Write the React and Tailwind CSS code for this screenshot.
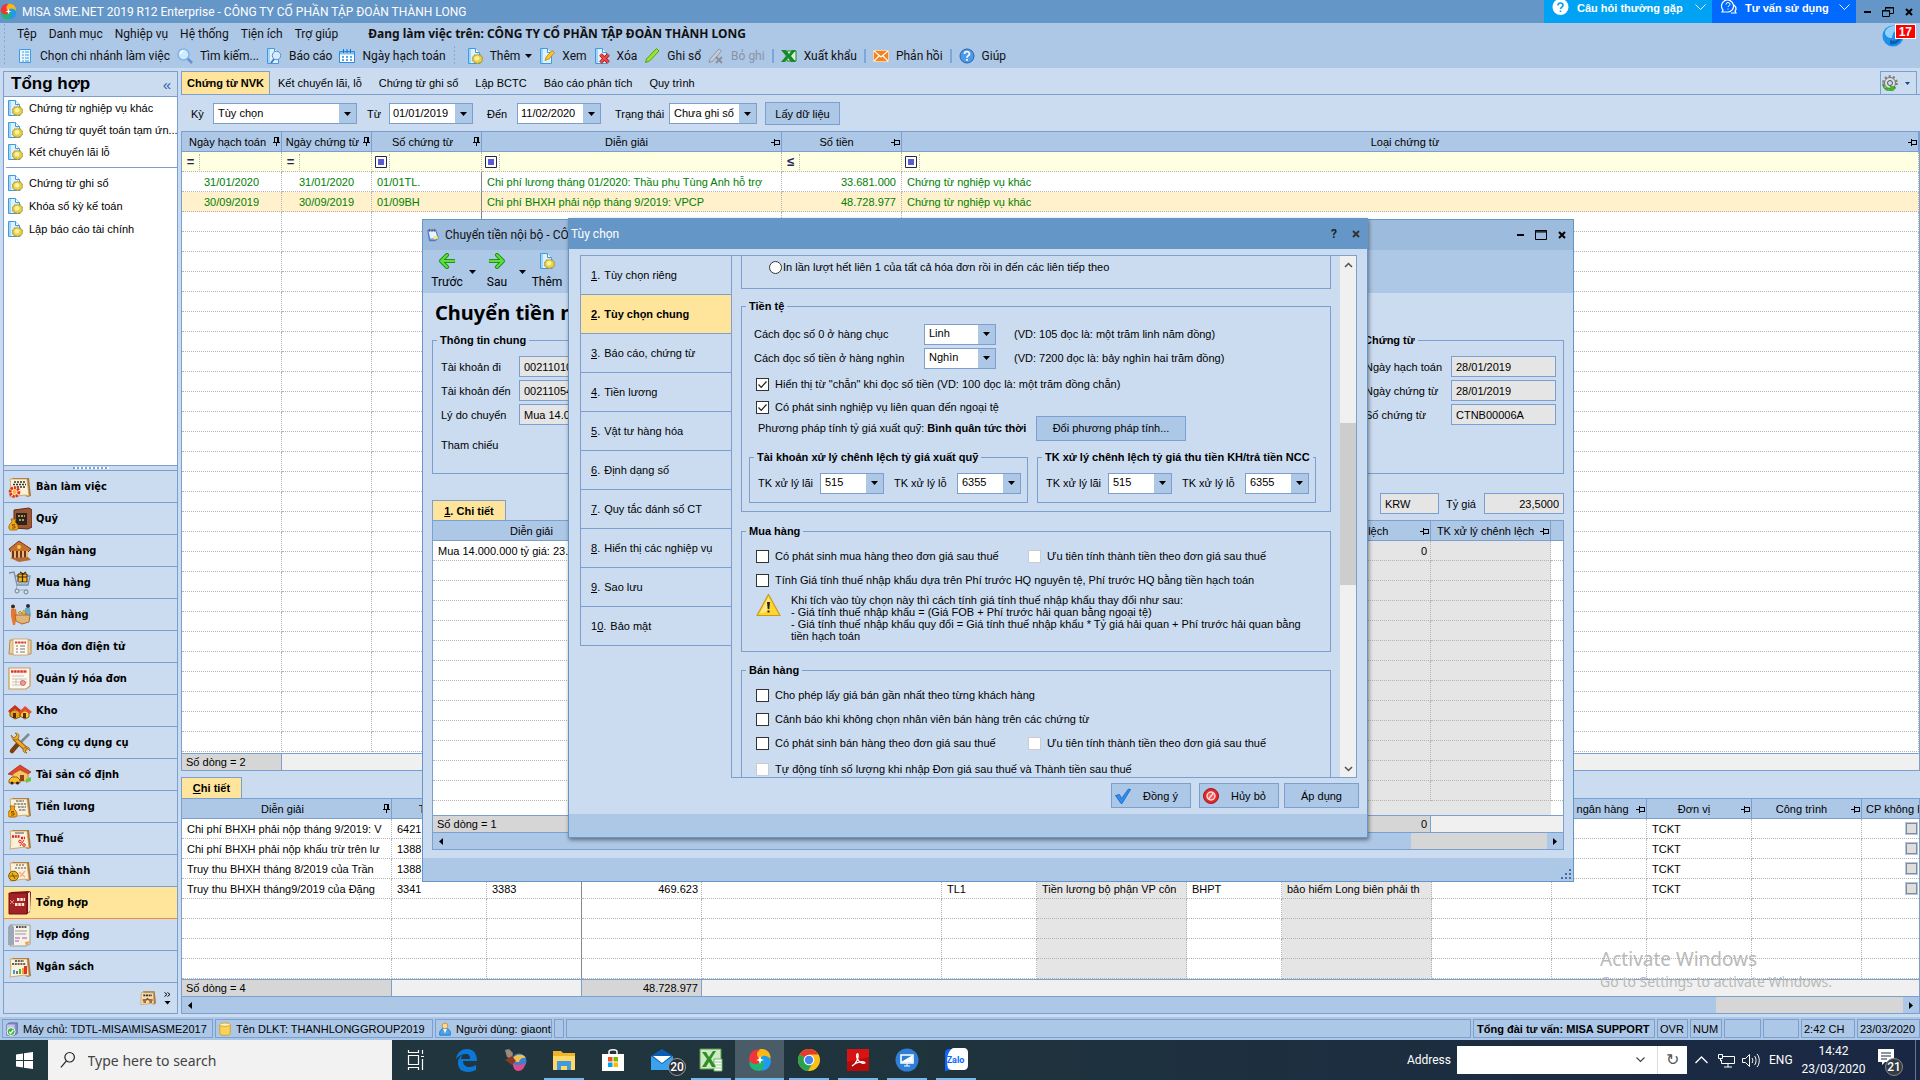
import { useId } from "react";

const UI = "font-['Roboto',sans-serif]";
const SEGOE = "font-['Noto_Sans',sans-serif]";

const MENU = ["Tệp", "Danh mục", "Nghiệp vụ", "Hệ thống", "Tiện ích", "Trợ giúp"];

const TABS = ["Kết chuyển lãi, lỗ", "Chứng từ ghi sổ", "Lập BCTC", "Báo cáo phân tích", "Quy trình"];

const NAV = [
  ["Bàn làm việc", "desk"],
  ["Quỹ", "safe"],
  ["Ngân hàng", "bank"],
  ["Mua hàng", "cart"],
  ["Bán hàng", "sell"],
  ["Hóa đơn điện tử", "einvoice"],
  ["Quản lý hóa đơn", "invoice"],
  ["Kho", "stock"],
  ["Công cụ dụng cụ", "tools"],
  ["Tài sản cố định", "asset"],
  ["Tiền lương", "salary"],
  ["Thuế", "tax"],
  ["Giá thành", "cost"],
  ["Tổng hợp", "ledger"],
  ["Hợp đồng", "contract"],
  ["Ngân sách", "budget"],
];

const OPTION_TABS = [
  ["1", "Tùy chọn riêng"],
  ["2", "Tùy chọn chung"],
  ["3", "Báo cáo, chứng từ"],
  ["4", "Tiền lương"],
  ["5", "Vật tư hàng hóa"],
  ["6", "Định dạng số"],
  ["7", "Quy tắc đánh số CT"],
  ["8", "Hiển thị các nghiệp vụ"],
  ["9", "Sao lưu"],
  ["10", "Bảo mật"],
];

const VOUCHERS = [
  ["31/01/2020", "31/01/2020", "01/01TL.", "Chi phí lương tháng 01/2020: Thầu phụ Tùng Anh hỗ trợ", "33.681.000", "Chứng từ nghiệp vụ khác"],
  ["30/09/2019", "30/09/2019", "01/09BH", "Chi phí BHXH phải nộp tháng 9/2019: VPCP", "48.728.977", "Chứng từ nghiệp vụ khác"],
];

const DETAIL_COLS = [
  { head: "Diễn giải", width: 210, pin: "v" },
  { head: "TK Nợ", width: 95, pin: "v" },
  { head: "TK Có", width: 95, pin: "v", solid: true },
  { head: "Số tiền", width: 120, pin: "h", right: true },
  { head: "Đối tượng", width: 240, pin: "h" },
  { head: "Khoản mục CP", width: 95, pin: "h" },
  { head: "Tên khoản mục CP", width: 150, pin: "h", grey: true },
  { head: "Mã thống kê", width: 95, pin: "h" },
  { head: "Tên mã thống kê", width: 150, pin: "h", grey: true },
  { head: "Đối tượng Có", width: 120, pin: "h" },
  { head: "TK ngân hàng", width: 95, pin: "h" },
  { head: "Đơn vị", width: 105, pin: "h" },
  { head: "Công trình", width: 110, pin: "h" },
];

const DETAILS = [
  ["Chi phí BHXH phải nộp tháng 9/2019: V", "6421", "", "", "", "", "", "", "", "", "", "TCKT", ""],
  ["Chi phí BHXH phải nộp khấu trừ trên lư", "1388", "", "", "", "", "", "", "", "", "", "TCKT", ""],
  ["Truy thu BHXH tháng 8/2019 của Trần", "1388", "", "", "", "", "", "", "", "", "", "TCKT", ""],
  ["Truy thu BHXH tháng9/2019 của Đặng", "3341", "3383", "469.623", "", "TL1", "Tiền lương bộ phận VP côn", "BHPT", "bảo hiểm Long biên phải th", "", "", "TCKT", ""],
];

/* ---------- small drawings ---------- */

function Pin({ dir = "h" }) {
  return dir === "h" ? (
    <svg width="9" height="8" viewBox="0 0 9 8" className="shrink-0" shapeRendering="crispEdges">
      <path d="M0 4.500h3M3.500 1v7M4 2.500h4.500v3M4 6h5" fill="none" stroke="#000" />
    </svg>
  ) : (
    <svg width="7" height="9" viewBox="0 0 7 9" className="shrink-0" shapeRendering="crispEdges">
      <path d="M0 5.500h7M1.500 5V.500h3.500M3.500 6v3" fill="none" stroke="#000" />
      <path d="M5 0v5" fill="none" stroke="#000" strokeWidth="2" />
    </svg>
  );
}

function Arrow({ className = "" }) {
  return (
    <svg width="7" height="4" viewBox="0 0 7 4" className={`shrink-0 ${className}`}>
      <path d="M0 0h7L3.500 4z" fill="#000" />
    </svg>
  );
}

function MisaLogo({ size }) {
  return (
    <svg width={size} height={size} viewBox="0 0 24 24">
      <path d="M12 12C7 12 6 5 12 1c8-1 12 6 10 11-2-4-6-4-10 0z" fill="#fdb813" />
      <path d="M12 12c0-5 7-6 11 0 0 8-6 12-11 10 4-2 4-6 0-10z" fill="#1d9bf0" />
      <path d="M12 12c5 0 6 7 0 11C4 23 0 18 2 12c2 4 6 4 10 0z" fill="#21b573" />
      <path d="M12 12c0 5-7 6-11 0C1 4 7 0 12 2 8 4 8 8 12 12z" fill="#f0353a" />
      <path d="M12 8l1 3 3 1-3 1-1 3-1-3-3-1 3-1z" fill="#fff" />
    </svg>
  );
}

function Paper() {
  return (
    <>
      <path d="M1.500.500h7l4 4v11h-11z" fill="#dff1fd" stroke="#3f9be0" />
      <path d="M8.500.500v4h4" fill="#fff" stroke="#3f9be0" />
      <path d="M3 1v14" stroke="#8ccbf5" strokeWidth="1.500" />
    </>
  );
}

function ToolIcon({ name, size = 16 }) {
  const shapes = {
    doc: (
      <>
        <path d="M2.500 1.500h11v13h-11z" fill="#e8f6ff" stroke="#3f9be0" />
        <path d="M5 4h2M5 7h2M5 10h2M5 13h2M8 4h4M8 7h4M8 10h4M8 13h4" stroke="#3f9be0" />
      </>
    ),
    search: (
      <>
        <path d="M10 10l5 5" stroke="#6c8fd8" strokeWidth="2.500" />
        <circle cx="6.500" cy="6.500" r="5.500" fill="#cfeafc" stroke="#7fb6ea" strokeWidth="1.500" />
        <path d="M3.500 6a3 3 0 013-3" stroke="#fff" strokeWidth="1.500" fill="none" />
      </>
    ),
    report: (
      <>
        <Paper />
        <circle cx="10.500" cy="7.500" r="4.200" fill="#d5ecff" stroke="#5a8fd0" />
        <path d="M8 11l-3 4" stroke="#4a78c8" strokeWidth="2" />
      </>
    ),
    calendar: (
      <>
        <path d="M.5 3.500h15v11H.5z" fill="#fff" stroke="#2a8be0" />
        <path d="M1 4h14v2.500H1z" fill="#7cc3f5" />
        <path d="M4.500 1v4M8 1v4M11.500 1v4" stroke="#1f6fc0" />
        <path d="M3 9h10M3 12h10" stroke="#2a8be0" strokeWidth="1.500" strokeDasharray="2 2" />
      </>
    ),
    add: (
      <>
        <Paper />
        <path d="M10.500 6l1.300 1.200 1.800-.4.500 1.700 1.600.8-.7 1.700.7 1.600-1.600.9-.5 1.600-1.800-.3-1.300 1.200-1.300-1.200-1.800.3-.5-1.600-1.600-.9.700-1.600-.7-1.700 1.600-.8.5-1.700 1.800.4z" fill="#e8d24c" stroke="#a58a1c" strokeWidth=".8" />
        <circle cx="10" cy="10.300" r="2.300" fill="#fbf2a0" />
      </>
    ),
    view: (
      <>
        <Paper />
        <path d="M6 12.500l1.200-3.500L13 2.500l2.500 2L10 11z" fill="#ffc52e" stroke="#b9801a" strokeWidth=".8" />
      </>
    ),
    remove: (
      <>
        <Paper />
        <path d="M6.500 6.500l8 8M14.500 6.500l-8 8" stroke="#a51212" strokeWidth="3.600" />
        <path d="M6.500 6.500l8 8M14.500 6.500l-8 8" stroke="#ef4a4a" strokeWidth="2" />
      </>
    ),
    post: <path d="M1.500 14.500l1-3.500L12.500.5 15 3l-9.500 10z" fill="#9be62a" stroke="#4ba312" />,
    unpost: (
      <>
        <path d="M1 14.500l1-3.500 9-10 2.500 2-8.500 10z" fill="#c4ccd6" stroke="#8e98a6" />
        <path d="M8 9l6 6M14 9l-6 6" stroke="#8a8f98" strokeWidth="1.800" />
      </>
    ),
    excel: (
      <>
        <path d="M6 3h9v10H6z" fill="#d9f0d2" stroke="#1e8a2c" />
        <path d="M0 2h5l3 4 3-4h4L10 8l5 6h-5l-3-4-3 4H0l5-6z" fill="#178a2a" />
      </>
    ),
    mail: (
      <>
        <path d="M.5 2.500h15v11H.5z" fill="#f58220" stroke="#fbd0a0" />
        <path d="M1 3l7 6 7-6M1 13l5-5M15 13l-5-5" fill="none" stroke="#fff" strokeWidth="1.200" />
      </>
    ),
    help: (
      <>
        <circle cx="8" cy="8" r="7" fill="#4c9be6" stroke="#2762b5" />
        <path d="M5.500 6a2.500 2.500 0 115 0c0 1.600-2.500 1.800-2.500 3.700M8 11v1.700" fill="none" stroke="#fff" strokeWidth="1.700" />
      </>
    ),
    prev: <path d="M15 8H2M8 2L2 8l6 6" fill="none" stroke="#1d9318" strokeWidth="4" strokeLinejoin="round" strokeLinecap="round" />,
    next: <path d="M1 8h13M8 2l6 6-6 6" fill="none" stroke="#1d9318" strokeWidth="4" strokeLinejoin="round" strokeLinecap="round" />,
    note: (
      <>
        <path d="M2 2.500h9l3 9-3 3H4z" fill="#6f9fe8" stroke="#4963b8" />
        <path d="M3 4h8l2 7-8 1z" fill="#e8f4ff" />
        <path d="M8 9h5l1 3-5 1z" fill="#ffe57a" />
        <path d="M4 1v3M7 1v3M10 1v3" stroke="#555" />
      </>
    ),
    gear: (
      <>
        <circle cx="8" cy="8" r="6.500" fill="none" stroke="#7b7b7b" strokeWidth="2.600" strokeDasharray="2 2.080" />
        <circle cx="8" cy="8" r="5.500" fill="#dedede" stroke="#777" />
        <circle cx="8" cy="8" r="2.500" fill="#cbdcf1" stroke="#555" />
        <path d="M1 8c0 5 4 6 8 5l-1-2 5 1-2 4-1-1c-5 2-10-1-9-7z" fill="#3cc41e" stroke="#1d8a12" strokeWidth=".5" />
      </>
    ),
    server: (
      <>
        <path d="M2 3l3-2h9v12l-3 2H2z" fill="#8b8fc9" stroke="#5a5e9c" />
        <path d="M2 3h9v12H2z" fill="#c3c6ea" />
        <circle cx="7" cy="11" r="4.500" fill="#3db53d" stroke="#fff" />
        <path d="M5 11l1.500 2L9.500 9" fill="none" stroke="#fff" strokeWidth="1.500" />
      </>
    ),
    db: (
      <>
        <path d="M2 3v10c0 3 12 3 12 0V3z" fill="#f7d35c" stroke="#d59b1e" />
        <ellipse cx="8" cy="3" rx="6" ry="2" fill="#fff2b3" stroke="#d59b1e" />
      </>
    ),
    user: (
      <>
        <path d="M2 15c-1-6 3-8 6-8s7 2 6 8z" fill="#4aa4ea" stroke="#2473c0" />
        <path d="M6 8l2 5 2-5z" fill="#fff" />
        <circle cx="8" cy="4.500" r="3.300" fill="#ffd79a" stroke="#c58a3c" />
      </>
    ),
    check: <path d="M.500 7.500l4-1 2 4L13.500 1l2 .5L7 15.500H6z" fill="#2f8ff0" stroke="#1461c0" strokeWidth=".8" />,
    cancel: (
      <>
        <circle cx="8" cy="8" r="7.500" fill="#d92c32" stroke="#a8141c" />
        <circle cx="8" cy="8" r="4" fill="#ee5a5e" stroke="#ffd9d9" strokeWidth="1.500" />
        <path d="M5.500 11l5-6" stroke="#ffd9d9" strokeWidth="1.500" />
      </>
    ),
  };
  const highlight = {
    prev: <path d="M15 8H2M8 2L2 8l6 6" fill="none" stroke="#5fe03c" strokeWidth="2" strokeLinecap="round" />,
    next: <path d="M1 8h13M8 2l6 6-6 6" fill="none" stroke="#5fe03c" strokeWidth="2" strokeLinecap="round" />,
  };
  return (
    <svg width={size} height={size} viewBox="0 0 16 16" className="shrink-0">
      {shapes[name]}
      {highlight[name]}
    </svg>
  );
}

function CreamPaper() {
  return (
    <>
      <path d="M4 3h17l2 18-4 1z" fill="#a8763a" />
      <path d="M2 4h17l2 17-4-1-15 2c1-6 1-12 0-18z" fill="#fbf0d8" stroke="#c99b5b" strokeWidth=".8" />
    </>
  );
}

function MoneyBag({ x = 0, y = 0 }) {
  return (
    <g transform={`translate(${x} ${y})`}>
      <path d="M3 3l-1-3h5L6 3c4 3 4 8 1 8H2c-3 0-3-5 1-8z" fill="#f0a818" stroke="#9b5a06" strokeWidth=".8" />
      <path d="M6 5.500H3.500V7H6v2H3" fill="none" stroke="#7a3c00" strokeWidth=".8" />
    </g>
  );
}

function NavIcon({ name, size = 24 }) {
  const shapes = {
    desk: (
      <>
        <CreamPaper />
        <path d="M6 7h11M5 9.500h13M9 12h8" stroke="#333" strokeWidth="1.300" strokeDasharray="2 1" />
        <circle cx="6.500" cy="17" r="4.300" fill="none" stroke="#e53012" strokeWidth="3" strokeDasharray="2.200 1" />
        <circle cx="6.500" cy="17" r="2" fill="#ffb52c" />
      </>
    ),
    safe: (
      <>
        <path d="M6 3l15-2 3 2v17l-4 2-14-1z" fill="#9b5634" stroke="#5f2d17" />
        <path d="M8 6h11v12H8z" fill="#2d241f" />
        <path d="M10 9h7M11 13h6" stroke="#b59a55" strokeWidth="2" strokeDasharray="2 1" />
        <MoneyBag x={1} y={12} />
      </>
    ),
    bank: (
      <>
        <path d="M1 10L11 2l12 8-3 3H3z" fill="#c86f32" stroke="#7a3812" />
        <path d="M3 12h17v7H3z" fill="#e9b878" />
        <path d="M5 12v7M9 12v7M13 12v7M17 12v7" stroke="#6c3415" strokeWidth="2" />
        <path d="M2 19l18-1 3 3-12 2z" fill="#b56c39" />
        <circle cx="11" cy="8" r="2" fill="#f4cd3f" />
      </>
    ),
    cart: (
      <>
        <path d="M1 2l5-1 3 13h11l2-9H7" fill="none" stroke="#7c8fa4" strokeWidth="1.300" />
        <path d="M10 3h9v8h-9z" fill="#f3b51f" stroke="#3b2703" />
        <path d="M14.500 3v8M10 6h9M12 1l3 2 3-2" stroke="#402600" strokeWidth="1.200" fill="none" />
        <path d="M9 14l-1 5h12M10 12h10M11 10v4M14 11v3M17 11v3" stroke="#9aabbc" fill="none" />
        <circle cx="9" cy="20" r="2" fill="#dce4ec" stroke="#708090" />
        <circle cx="18" cy="21" r="2" fill="#dce4ec" stroke="#708090" />
      </>
    ),
    sell: (
      <>
        <circle cx="5" cy="3.500" r="2" fill="#3b2a20" />
        <path d="M3 6h5l1 7-2 9H5L3 13z" fill="#e8762b" />
        <circle cx="20" cy="3" r="2" fill="#2c2c3a" />
        <path d="M17 5h5l1 7h-6z" fill="#6da9cb" />
        <path d="M7 12h15l-1 7-7 2-6-3z" fill="#e3b574" stroke="#a56b2b" />
        <path d="M10 10l2-2 2 2 2-3 2 4z" fill="#ffd23b" stroke="#9a6a00" strokeWidth=".6" />
      </>
    ),
    einvoice: (
      <>
        <path d="M2 5h21v14H1z" fill="#ead2a4" stroke="#b98a4c" />
        <path d="M5 4h15v16H5z" fill="#fffaf0" stroke="#c99b5b" strokeWidth=".8" />
        <path d="M7 7.500h11" stroke="#dd3a2a" strokeWidth="2" strokeDasharray="2.500 .6" />
        <path d="M8 11h2M12 11h5M8 14h2M12 14h5M8 17h2M12 17h5" stroke="#777" />
      </>
    ),
    invoice: (
      <>
        <path d="M1 1h21v18l-4 3H1z" fill="#fff8ec" stroke="#c99b5b" strokeWidth="1.200" />
        <path d="M3 4.500h16" stroke="#e03030" strokeWidth="2.500" strokeDasharray="2.500 .6" />
        <path d="M4 9h12M4 12h15M4 15h15M4 18h9M8 12v6M13 12v6" stroke="#b8b8b8" strokeWidth=".8" />
        <circle cx="15" cy="16" r="2.500" fill="#e9a0a0" stroke="#cc4444" strokeWidth=".7" />
      </>
    ),
    stock: (
      <>
        <path d="M2 11h10v7l-5 2-5-3z" fill="#e5a11b" stroke="#6b3f00" strokeWidth=".8" />
        <path d="M0 12l7-6 7 6-2 2-5-4-5 4z" fill="#c72f1e" />
        <path d="M13 12h8v6l-4 2-5-3z" fill="#ffcf35" stroke="#6b3f00" strokeWidth=".8" />
        <path d="M11 13l6-6 7 6-3 2-4-4-4 4z" fill="#e64a2b" />
        <path d="M5 14h3v5H5zM15 14h3v5h-3z" fill="#5a2b00" />
      </>
    ),
    tools: (
      <>
        <path d="M21 3L9 15" stroke="#7c8894" strokeWidth="2.500" />
        <path d="M10 13l-6 7" stroke="#7c3f12" strokeWidth="4.500" strokeLinecap="round" />
        <path d="M6 7l13 12" stroke="#8a5a12" strokeWidth="4.600" />
        <path d="M6 7l13 12" stroke="#f0a82a" strokeWidth="3" />
        <path d="M3 4l3 3 3-3-2-2c4 0 5 3 3 6-2 2-6 1-7-4zM22 20l-3-3-2 3 2 2c-4 0-5-3-3-5 3-2 6-1 6 3z" fill="#f0a82a" stroke="#8a5a12" strokeWidth=".7" />
      </>
    ),
    asset: (
      <>
        <path d="M0 11L12 2l11 7-3 2-8-4-8 5z" fill="#e3432a" stroke="#8f1e0e" strokeWidth=".6" />
        <path d="M5 11l7-4 8 4v7H5z" fill="#f7c469" stroke="#a56a18" strokeWidth=".6" />
        <path d="M12 12h4v6h-4z" fill="#8b4a13" />
        <path d="M1 17l3-3h5l3 3v3H1z" fill="#ffbf1f" stroke="#7a4a00" strokeWidth=".8" />
        <circle cx="4" cy="20" r="1.500" fill="#222" />
        <circle cx="9.500" cy="20" r="1.500" fill="#222" />
        <path d="M18 16l5-2v4l-5 2z" fill="#6cc24a" />
      </>
    ),
    salary: (
      <>
        <CreamPaper />
        <path d="M8 6h8M6 9h12M10 12h8M11 15h7" stroke="#444" strokeWidth="1.100" strokeDasharray="2.500 .8" />
        <MoneyBag x={0} y={11} />
      </>
    ),
    tax: (
      <>
        <CreamPaper />
        <path d="M7 6h9" stroke="#555" />
        <path d="M4 9.500h8M13 11h4" stroke="#e02020" strokeWidth="2.500" strokeDasharray="2 .8" />
        <circle cx="12" cy="14.500" r="1.300" fill="none" stroke="#e02020" />
        <circle cx="16" cy="18" r="1.300" fill="none" stroke="#e02020" />
        <path d="M16 13l-4 6" stroke="#e02020" />
      </>
    ),
    cost: (
      <>
        <CreamPaper />
        <path d="M8 6h8M7 9h11" stroke="#555" strokeDasharray="2 1" />
        <path d="M11 13l6 5M17 12l-5 6" stroke="#f2a98b" strokeWidth="1.200" />
        <circle cx="5.500" cy="17" r="4.800" fill="#f2b41e" stroke="#7a5200" />
        <path d="M2 17h7M4 14l3 6" stroke="#7a5200" />
      </>
    ),
    ledger: (
      <>
        <path d="M3 1l18-1 2 1-1 20-3 2H2z" fill="#7b1518" />
        <path d="M1 2h18v21H1z" fill="#a32227" stroke="#6e1013" />
        <path d="M20 2l2-1v19l-2 2z" fill="#f0dfc4" />
        <path d="M9 8.500h8M7 13.500h10" fill="none" stroke="#ffe7d0" strokeWidth="3" strokeDasharray="2.500 .8" />
        <path d="M2 9l4 4M6 9l-4 4" stroke="#e9c0a0" strokeWidth=".7" />
      </>
    ),
    contract: (
      <>
        <path d="M2 2h20v19l-4 2H2z" fill="#f7f2e6" stroke="#8a8a8a" strokeWidth=".8" />
        <path d="M0 4l3-3 3 3v18H0z" fill="#9aa8b8" />
        <path d="M8 4h11" stroke="#555" strokeWidth="2" strokeDasharray="2 .8" />
        <path d="M7 8h12M7 11h11" stroke="#999" />
        <path d="M7 15h5M14 15h5M7 18h4" stroke="#b24acb" strokeWidth="1.200" />
        <path d="M17 19l6-1-5 5z" fill="#e9a83c" />
      </>
    ),
    budget: (
      <>
        <CreamPaper />
        <path d="M7 6h9M4 9h14" stroke="#333" strokeWidth="1.500" strokeDasharray="2 .8" />
        <path d="M5 15h2v4H5z" fill="#36a4e0" />
        <path d="M8 16h2v3H8z" fill="#777" />
        <path d="M11 14h2v5h-2z" fill="#3cb54a" />
        <path d="M14 13h2v6h-2z" fill="#f2a51e" />
        <path d="M16 11h3v8h-3z" fill="#e03030" />
      </>
    ),
    deal: (
      <>
        <path d="M4 2h18l2 18-4 2z" fill="#a8763a" />
        <path d="M2 4h18l1 18-3-2-17 2z" fill="#f3ddb0" stroke="#c99b5b" />
        <path d="M5 8h13" stroke="#333" strokeWidth="2.500" strokeDasharray="3 1" />
        <path d="M4 15h5l2-2 3 2h5M5 18h4M14 18h4" stroke="#8a4a1c" strokeWidth="2" fill="none" />
      </>
    ),
  };
  return (
    <svg width={size} height={size} viewBox="0 0 24 24" className="shrink-0">
      {shapes[name]}
    </svg>
  );
}

/* ---------- controls ---------- */

function Combo({ value, label, className = "" }) {
  return (
    <span className={`relative flex h-[21px] border border-[#7ba0d0] bg-white ${className}`}>
      <select aria-label={label} defaultValue={value} className="w-full appearance-none bg-transparent pb-[2px] pl-1 text-black outline-none">
        <option>{value}</option>
      </select>
      <span className="pointer-events-none absolute inset-y-0 right-0 flex w-[17px] items-center justify-center bg-[#adc7e6]">
        <Arrow />
      </span>
    </span>
  );
}

function DateField({ value, label, className = "" }) {
  return (
    <span className={`flex h-[21px] border border-[#7ba0d0] bg-white ${className}`}>
      <input aria-label={label} defaultValue={value} className="w-full min-w-0 flex-1 pb-[2px] pl-[3px] outline-none" />
      <button aria-label={`Mở lịch ${label}`} className="flex w-[17px] shrink-0 items-center justify-center bg-[#adc7e6]">
        <Arrow />
      </button>
    </span>
  );
}

function Check({ children, checked, disabled, className = "" }) {
  const id = useId();
  return (
    <div className={`flex items-center gap-[6px] ${className}`}>
      <span className="relative h-[13px] w-[13px] shrink-0">
        <input
          id={id}
          type="checkbox"
          defaultChecked={checked}
          disabled={disabled}
          className="peer block h-[13px] w-[13px] appearance-none border border-[#333] bg-white disabled:border-[#ccc]"
        />
        <svg viewBox="0 0 13 13" className="pointer-events-none absolute inset-0 hidden h-[13px] w-[13px] peer-checked:block">
          <path d="M2.500 6.500l2.700 2.800L10.500 3.500" fill="none" stroke="#222" strokeWidth="1.200" />
        </svg>
      </span>
      <label htmlFor={id} className="whitespace-nowrap leading-[14px]">
        {children}
      </label>
    </div>
  );
}

function Field({ label, value, className = "", inputClass = "" }) {
  const id = useId();
  return (
    <div className={`flex items-center ${className}`}>
      <label htmlFor={id} className="flex-1 whitespace-nowrap">
        {label}
      </label>
      <input id={id} readOnly defaultValue={value} className={`h-[21px] border border-[#7ba0d0] bg-[#e5e5e5] px-1 outline-none ${inputClass}`} />
    </div>
  );
}

function Group({ title, children, className = "" }) {
  return (
    <fieldset className={`min-w-0 border border-[#7ba0d0] ${className}`}>
      {title && <legend className="ml-1 px-[3px] font-bold leading-[14px]">{title}</legend>}
      {children}
    </fieldset>
  );
}

function HeadCell({ children, pin, className = "" }) {
  return (
    <th className={`h-5 border-b border-r border-[#7ba0d0] bg-[#adc7e6] p-0 font-normal ${className}`}>
      <span className="flex items-center overflow-hidden pr-px">
        <span className="flex-1 overflow-hidden whitespace-nowrap text-center">{children}</span>
        {pin && <Pin dir={pin} />}
      </span>
    </th>
  );
}

/* ---------- main window ---------- */

function TitleBar() {
  return (
    <header className="relative flex h-[23px] items-center bg-[#6596c8] text-white">
      <MisaLogo size={17} />
      <h1 className={`ml-[5px] flex-1 text-[12px] ${UI}`}>MISA SME.NET 2019 R12 Enterprise - CÔNG TY CỔ PHẦN TẬP ĐOÀN THÀNH LONG</h1>
      <button className="flex h-full w-[168px] items-start bg-[#00a2f3] pl-2 text-[11px] font-bold">
        <svg width="17" height="17" viewBox="0 0 17 17">
          <circle cx="8.500" cy="7" r="8" fill="#fff" />
          <path d="M6 5.500a2.500 2.500 0 115 0c0 1.500-2.500 1.800-2.500 3.500M8.500 10.500v1.500" fill="none" stroke="#00a2f3" strokeWidth="1.600" />
        </svg>
        <span className="ml-2 flex-1 whitespace-nowrap text-left leading-[16px]">Câu hỏi thường gặp</span>
        <Chevron />
      </button>
      <button className="flex h-full w-[144px] items-start bg-[#0069ff] pl-2 text-[11px] font-bold">
        <svg width="17" height="16" viewBox="0 0 17 16">
          <path d="M2 12l1-2a6 6 0 114 2z" fill="none" stroke="#fff" strokeWidth="1.200" />
          <path d="M6 4.500a2 2 0 114 0c0 1-2 1.200-2 2.500M8 8.500v1" fill="none" stroke="#fff" />
          <path d="M14 5c3 3 2 5 1 6l1 2h-5" fill="none" stroke="#fff" strokeWidth="1.200" />
        </svg>
        <span className="ml-2 flex-1 whitespace-nowrap text-left leading-[16px]">Tư vấn sử dụng</span>
        <Chevron />
      </button>
      <div className="flex h-full w-[64px] items-center justify-around">
        <WindowButton kind="min" />
        <WindowButton kind="restore" />
        <WindowButton kind="close" />
      </div>
    </header>
  );
}

function Chevron() {
  return (
    <svg width="11" height="7" viewBox="0 0 11 7" className="mr-[6px] mt-1">
      <path d="M.5.5l5 5 5-5" fill="none" stroke="#fff" />
    </svg>
  );
}

function WindowButton({ kind, color = "#000" }) {
  const labels = { min: "Thu nhỏ", restore: "Khôi phục", max: "Phóng to", close: "Đóng" };
  return (
    <button aria-label={labels[kind]} className="flex h-4 w-4 items-center justify-center">
      <svg width="12" height="12" viewBox="0 0 12 12">
        {kind === "min" && <path d="M3 6h7" stroke={color} strokeWidth="2" />}
        {kind === "restore" && <path d="M3.500 4V1.500h8v6H8M.5 4.500h7v6h-7zM3 2h9M0 5h8" fill="none" stroke={color} />}
        {kind === "max" && <path d="M.5 1.500h11v9H.5zM0 3h12M0 2h12" fill="none" stroke={color} />}
        {kind === "close" && <path d="M3 3l6 6M9 3l-6 6" stroke={color} strokeWidth="2" />}
      </svg>
    </button>
  );
}

function Grip() {
  return <span className="mr-1 w-[3px] self-stretch bg-[radial-gradient(circle,#8fa8c8_1px,transparent_1px)] bg-[length:3px_4px]" />;
}

function ToolButton({ icon, children, disabled, more }) {
  return (
    <button disabled={disabled} className="flex items-center gap-[7px] whitespace-nowrap disabled:text-[#8a93a3]">
      <ToolIcon name={icon} />
      <span className="flex items-center gap-[5px]">
        {children}
        {more && <Arrow />}
      </span>
    </button>
  );
}

function Sep() {
  return <span className="h-[14px] w-[2px] bg-[#7ba7dc]" />;
}

function MenuBars() {
  return (
    <div className={`relative bg-[#adc7e6] text-[12px] text-[#111] ${UI}`}>
      <nav className="flex h-[22px] items-center pl-[3px]">
        <Grip />
        <div className="ml-[7px] flex gap-3">
          {MENU.map((item) => (
            <button key={item}>{item}</button>
          ))}
        </div>
        <strong className={`ml-[30px] font-bold ${SEGOE}`}>Đang làm việc trên: CÔNG TY CỔ PHẦN TẬP ĐOÀN THÀNH LONG</strong>
      </nav>
      <div className="flex h-[23px] items-center gap-[7px] pb-[2px] pl-[3px]">
        <Grip />
        <ToolButton icon="doc">Chọn chi nhánh làm việc</ToolButton>
        <ToolButton icon="search">Tìm kiếm...</ToolButton>
        <ToolButton icon="report">Báo cáo</ToolButton>
        <ToolButton icon="calendar">Ngày hạch toán</ToolButton>
        <Grip />
        <ToolButton icon="add" more>
          Thêm
        </ToolButton>
        <ToolButton icon="view">Xem</ToolButton>
        <ToolButton icon="remove">Xóa</ToolButton>
        <ToolButton icon="post">Ghi sổ</ToolButton>
        <ToolButton icon="unpost" disabled>
          Bỏ ghi
        </ToolButton>
        <Sep />
        <ToolButton icon="excel">Xuất khẩu</ToolButton>
        <Sep />
        <ToolButton icon="mail">Phản hồi</ToolButton>
        <Sep />
        <ToolButton icon="help">Giúp</ToolButton>
      </div>
      <button aria-label="Thông báo" className="absolute right-1 top-px h-[24px] w-[34px]">
        <svg width="24" height="24" viewBox="0 0 24 24">
          <circle cx="11" cy="12" r="10.500" fill="#1f8fe8" />
          <path d="M3 8c3-7 12-8 16-2-6-1-8 2-9 8-4 0-7-2-7-6z" fill="#8fd2ff" />
          <path d="M8 16c4 2 9 0 12-5-1 7-7 11-12 9z" fill="#0a5fb8" />
        </svg>
        <span className="absolute right-0 top-0 flex h-[15px] items-center border border-white bg-[#f00] px-[3px] font-['Liberation_Sans',sans-serif] text-[12px] font-bold text-white">17</span>
      </button>
    </div>
  );
}

function SideLink({ children }) {
  return (
    <a href="#list" className="flex h-[22px] items-center gap-[6px] overflow-hidden whitespace-nowrap pl-[3px]">
      <ToolIcon name="add" />
      {children}
    </a>
  );
}

function Sidebar() {
  return (
    <aside className="flex w-[175px] shrink-0 flex-col border border-[#7ba0d0]">
      <div className="flex h-[25px] items-center justify-between border-b border-[#7ba0d0] bg-[#cbdcf1] pl-[7px] pr-[6px]">
        <h2 className="text-[17px] font-bold">Tổng hợp</h2>
        <button aria-label="Thu gọn" className="text-[15px] leading-none text-[#2f5fa8]">«</button>
      </div>
      <div className="flex-1 bg-white">
        <SideLink>Chứng từ nghiệp vụ khác</SideLink>
        <SideLink>Chứng từ quyết toán tạm ứn...</SideLink>
        <SideLink>Kết chuyển lãi lỗ</SideLink>
        <div className="my-1 ml-[2px] border-t border-[#7ba0d0]" />
        <div className="flex flex-col gap-px">
          <SideLink>Chứng từ ghi sổ</SideLink>
          <SideLink>Khóa sổ kỳ kế toán</SideLink>
          <SideLink>Lập báo cáo tài chính</SideLink>
        </div>
      </div>
      <div className="flex h-[6px] items-center justify-center border-y border-[#7ba0d0] bg-[#cbdcf1]">
        <span className="h-[2px] w-9 bg-[repeating-linear-gradient(90deg,#7ba0d0_0_2px,#fff_2px_4px)]" />
      </div>
      <nav className="flex flex-col">
        {NAV.map(([label, icon]) => (
          <button
            key={label}
            className={`flex h-8 items-center gap-1 border-b pl-1 text-left font-['DejaVu_Sans_Condensed','DejaVu_Sans',sans-serif] text-[11px] font-bold ${
              label === "Tổng hợp" ? "border-[#ff8a2b] bg-[#ffe59b]" : "border-[#7ba0d0] bg-[#cbdcf1]"
            }`}
          >
            <NavIcon name={icon} />
            {label}
          </button>
        ))}
      </nav>
      <div className="flex h-[30px] items-center justify-end gap-2 pr-[6px]">
        <NavIcon name="deal" size={16} />
        <button aria-label="Thêm mục" className="flex flex-col items-center">
          <svg width="7" height="13" viewBox="0 0 7 13">
            <path d="M.5.500l2.500 2-2.500 2M3.500.500l2.500 2-2.500 2" fill="none" stroke="#000" />
            <path d="M.5 9h6l-3 3.500z" fill="#000" />
          </svg>
        </button>
      </div>
    </aside>
  );
}

function FilterCell({ mark }) {
  return (
    <td className="h-5 border-b border-r border-dotted border-[#b4b4b4] bg-[#ffffe1] p-0">
      <span className="flex h-full items-center">
        <span className="flex h-[16px] w-[18px] items-center justify-center border-r border-dotted border-[#b4b4b4] text-[13px] font-bold text-[#24245e]">
          {mark === "box" ? (
            <svg width="12" height="12" viewBox="0 0 12 12">
              <path d="M.5.500h11v11H.5z" fill="#fff" stroke="#24245e" />
              <path d="M3 3h6v6H3z" fill="#5b5bd0" />
            </svg>
          ) : (
            mark
          )}
        </span>
      </span>
    </td>
  );
}

function VoucherTable() {
  const cell = "h-5 border-b border-r border-dotted border-[#b4b4b4] px-[5px] py-0 leading-[18px] whitespace-nowrap";
  const blank = Array.from({ length: 27 }, (_, i) => i);
  return (
    <section className="flex flex-1 flex-col border border-[#7ba0d0] bg-white">
      <table className="w-full table-fixed border-separate border-spacing-0">
        <colgroup>
          <col className="w-[100px]" />
          <col className="w-[90px]" />
          <col className="w-[110px]" />
          <col className="w-[300px]" />
          <col className="w-[120px]" />
          <col />
        </colgroup>
        <thead>
          <tr>
            <HeadCell pin="v">Ngày hạch toán</HeadCell>
            <HeadCell pin="v">Ngày chứng từ</HeadCell>
            <HeadCell pin="v">Số chứng từ</HeadCell>
            <HeadCell pin="h">Diễn giải</HeadCell>
            <HeadCell pin="h">Số tiền</HeadCell>
            <HeadCell pin="h">Loại chứng từ</HeadCell>
          </tr>
        </thead>
        <tbody>
          <tr>
            <FilterCell mark="=" />
            <FilterCell mark="=" />
            <FilterCell mark="box" />
            <FilterCell mark="box" />
            <FilterCell mark="≤" />
            <FilterCell mark="box" />
          </tr>
          {VOUCHERS.map((row, r) => (
            <tr key={row[2]} className={`text-[#008000] ${r === 1 ? "bg-[#fff1cb]" : "bg-white"}`}>
              {row.map((text, c) => (
                <td
                  key={c}
                  className={`${cell} ${c < 2 ? "text-center" : ""} ${c === 4 ? "text-right" : ""} ${c === 2 ? "border-r-[#888] [border-right-style:solid]" : ""}`}
                >
                  {text}
                </td>
              ))}
            </tr>
          ))}
          {blank.map((r) => (
            <tr key={r}>
              {[0, 1, 2, 3, 4, 5].map((c) => (
                <td key={c} className={`${cell} ${c === 2 ? "border-r-[#888] [border-right-style:solid]" : ""}`} />
              ))}
            </tr>
          ))}
        </tbody>
      </table>
      <div className="flex-1" />
      <div className="flex h-[17px] border-t border-[#7ba0d0] bg-[#f0f0f0]">
        <span className="w-[100px] border-r border-[#7ba0d0] bg-[#d6d6d6] pl-1 leading-[16px]">Số dòng = 2</span>
      </div>
    </section>
  );
}

function DetailTable() {
  return (
    <section className="border border-[#7ba0d0] bg-white">
      <table className="w-full table-fixed border-separate border-spacing-0">
        <colgroup>
          {DETAIL_COLS.map((c) => (
            <col key={c.head} style={{ width: c.width }} />
          ))}
          <col />
        </colgroup>
        <thead>
          <tr>
            {DETAIL_COLS.map((c) => (
              <HeadCell key={c.head} pin={c.pin}>
                {c.head}
              </HeadCell>
            ))}
            <th className="overflow-hidden whitespace-nowrap border-b border-[#7ba0d0] bg-[#adc7e6] p-0 pl-1 text-left font-normal">CP không hợp lý</th>
          </tr>
        </thead>
        <tbody>
          {Array.from({ length: 8 }, (_, r) => (
            <tr key={r}>
              {DETAIL_COLS.map((c, i) => (
                <td
                  key={c.head}
                  className={`h-5 overflow-hidden whitespace-nowrap border-b border-r border-dotted border-[#b4b4b4] px-[5px] py-0 leading-[18px] ${c.grey ? "bg-[#e5e5e5]" : ""} ${
                    c.right ? "pr-[3px] text-right" : ""
                  } ${c.solid ? "border-r-[#888] [border-right-style:solid]" : ""}`}
                >
                  {DETAILS[r]?.[i]}
                </td>
              ))}
              <td className="h-5 border-b border-dotted border-[#b4b4b4] p-0">
                {r < 4 && (
                  <span className="flex justify-end pr-px">
                    <input
                      type="checkbox"
                      aria-label="CP không hợp lý"
                      className="h-[13px] w-[13px] appearance-none border-2 border-[#adc7e6] bg-[#dedede] outline outline-1 -outline-offset-2 outline-[#8a8a8a]"
                    />
                  </span>
                )}
              </td>
            </tr>
          ))}
        </tbody>
      </table>
      <div className="flex h-[17px] border-t border-[#7ba0d0] bg-[#f0f0f0] leading-[16px]">
        <span className="w-[210px] border-r border-[#7ba0d0] bg-[#d6d6d6] pl-1">Số dòng = 4</span>
        <span className="w-[190px] border-r border-[#7ba0d0]" />
        <span className="w-[120px] border-r border-[#7ba0d0] bg-[#d6d6d6] pr-[3px] text-right">48.728.977</span>
      </div>
      <HScroll thumb="w-[187px]" />
    </section>
  );
}

function HScroll({ thumb }) {
  return (
    <div className="flex h-[17px] items-stretch border-t border-[#7ba0d0] bg-[#adc7e6]">
      <button aria-label="Cuộn trái" className="flex w-4 items-center justify-center">
        <svg width="4" height="7" viewBox="0 0 4 7">
          <path d="M4 0v7L0 3.500z" />
        </svg>
      </button>
      <span className="flex-1" />
      <span className={`bg-[#d6d6d6] ${thumb}`} />
      <button aria-label="Cuộn phải" className="flex w-4 items-center justify-center">
        <svg width="4" height="7" viewBox="0 0 4 7">
          <path d="M0 0v7l4-3.500z" />
        </svg>
      </button>
    </div>
  );
}

function Workspace() {
  return (
    <main className="flex min-w-0 flex-1 flex-col">
      <div className="flex h-6 items-stretch border-b border-[#7ba0d0]">
        <button className="mr-[7px] w-[89px] whitespace-nowrap border border-b-0 border-[#7ba0d0] bg-[#ffe59b] font-bold">Chứng từ NVK</button>
        <div className="flex flex-1 items-center gap-[17px] pl-px">
          {TABS.map((t) => (
            <button key={t} className="whitespace-nowrap">
              {t}
            </button>
          ))}
        </div>
        <button aria-label="Tùy chỉnh" className="mr-[3px] flex w-[37px] items-center gap-[7px] border border-b-0 border-[#7ba0d0] pl-px">
          <ToolIcon name="gear" />
          <svg width="5" height="3" viewBox="0 0 5 3">
            <path d="M0 0h5L2.500 3z" fill="#15428b" />
          </svg>
        </button>
      </div>
      <div className="flex h-9 items-center pl-[10px] pt-px">
        <span className="w-[22px]">Kỳ</span>
        <Combo label="Kỳ" value="Tùy chọn" className="w-[144px]" />
        <span className="ml-[10px] w-[22px]">Từ</span>
        <DateField label="Từ" value="01/01/2019" className="w-[84px]" />
        <span className="ml-[14px] w-[30px]">Đến</span>
        <DateField label="Đến" value="11/02/2020" className="w-[84px]" />
        <span className="ml-[14px] w-[54px] whitespace-nowrap">Trạng thái</span>
        <Combo label="Trạng thái" value="Chưa ghi sổ" className="w-[88px]" />
        <button className="ml-2 h-[23px] w-[75px] border border-[#7ba0d0] bg-[#adc7e6]">Lấy dữ liệu</button>
      </div>
      <VoucherTable />
      <div className="mt-[6px] flex h-[21px]">
        <button className="w-[61px] border border-b-0 border-[#7ba0d0] bg-[#ffe59b] font-bold">
          <u>C</u>hi tiết
        </button>
      </div>
      <DetailTable />
    </main>
  );
}

function StatusBar() {
  const box = "flex h-[19px] items-center gap-1 whitespace-nowrap border border-[#7ba0d0]";
  return (
    <footer className="flex h-[23px] items-center gap-[2px] bg-[#adc7e6] pl-[2px]">
      <span className={`${box} w-[211px] px-[2px]`}>
        <ToolIcon name="server" size={14} /> Máy chủ: TDTL-MISA\MISASME2017
      </span>
      <span className={`${box} w-[218px] px-[2px]`}>
        <ToolIcon name="db" size={14} /> Tên DLKT: THANHLONGGROUP2019
      </span>
      <span className={`${box} w-[117px] px-[2px]`}>
        <ToolIcon name="user" size={14} /> Người dùng: giaont
      </span>
      <span className={`${box} w-[10px]`} />
      <span className={`${box} flex-1`} />
      <span className={`${box} w-[182px] px-[3px] font-bold`}>Tổng đài tư vấn: MISA SUPPORT</span>
      <span className={`${box} w-[31px] px-[2px]`}>OVR</span>
      <span className={`${box} w-[32px] px-[2px]`}>NUM</span>
      <span className={`${box} w-[37px]`} />
      <span className={`${box} w-[36px]`} />
      <span className={`${box} w-[54px] px-[2px]`}>2:42 CH</span>
      <span className={`${box} w-[63px] px-[2px]`}>23/03/2020</span>
    </footer>
  );
}

/* ---------- transfer window ---------- */

function TransferWindow() {
  const rows = Array.from({ length: 13 }, (_, i) => i);
  const cell = "h-5 border-b border-r border-dotted border-[#b4b4b4] px-[5px] py-0 leading-[18px] whitespace-nowrap";
  return (
    <section className="absolute left-[422px] top-[219px] z-10 w-[1152px] border border-[#6596c8] bg-[#cbdcf1]">
      <header className={`flex h-[30px] items-center gap-[5px] bg-[#9dbbdc] pl-[3px] pr-[3px] text-[12px] text-[#111] ${UI}`}>
        <ToolIcon name="note" size={14} />
        <h2 className="flex-1">Chuyển tiền nội bộ - CÔNG TY CỔ PHẦN TẬP ĐOÀN THÀNH LONG</h2>
        <div className="flex gap-[5px]">
          <WindowButton kind="min" />
          <WindowButton kind="max" />
          <WindowButton kind="close" />
        </div>
      </header>
      <div className={`flex h-[43px] bg-[#adc7e6] pl-2 text-[12px] ${UI}`}>
        {[
          ["prev", "Trước", true],
          ["next", "Sau", true],
          ["add", "Thêm", false],
        ].map(([icon, label, more]) => (
          <button key={label} className="flex w-[50px] items-center gap-[6px]">
            <span className="flex w-[32px] flex-col items-center gap-1 leading-[18px]">
              <ToolIcon name={icon} />
              {label}
            </span>
            {more && <Arrow />}
          </button>
        ))}
      </div>
      <div className="px-[9px]">
        <h3 className={`h-10 whitespace-nowrap pl-[3px] pt-[6px] text-[20px] font-bold leading-7 ${SEGOE}`}>Chuyển tiền nội bộ</h3>
        <div className="flex gap-2">
          <Group title="Thông tin chung" className="h-[141px] flex-1">
            <div className="flex flex-col gap-[3px] pl-2 pt-[9px]">
              <Field label="Tài khoản đi" value="0021101026008" className="w-[300px]" inputClass="w-[222px]" />
              <Field label="Tài khoản đến" value="0021105428009" className="w-[300px]" inputClass="w-[222px]" />
              <Field label="Lý do chuyển" value="Mua 14.000.000 tỷ giá: 23.5" className="w-[300px]" inputClass="w-[222px]" />
              <span className="mt-[10px]">Tham chiếu</span>
            </div>
          </Group>
          <Group title="Chứng từ" className="h-[141px] w-[208px]">
            <div className="flex flex-col gap-[3px] pl-2 pr-[7px] pt-[9px]">
              <Field label="Ngày hạch toán" value="28/01/2019" inputClass="w-[105px]" />
              <Field label="Ngày chứng từ" value="28/01/2019" inputClass="w-[105px]" />
              <Field label="Số chứng từ" value="CTNB00006A" inputClass="w-[105px]" />
            </div>
          </Group>
        </div>
        <div className="mt-[19px] flex h-[27px] items-start justify-end">
          <Field label="Loại tiền" value="KRW" className="w-[120px]" inputClass="w-[59px]" />
          <Field label="Tỷ giá" value="23,5000" className="ml-[7px] w-[118px]" inputClass="w-[80px] text-right" />
        </div>
        <div className="-mt-5 flex h-5">
          <button className="w-[74px] border border-b-0 border-[#7ba0d0] bg-[#ffe59b] font-bold">
            <u>1</u>. Chi tiết
          </button>
        </div>
        <div className="border border-[#7ba0d0] bg-white">
          <table className="w-full table-fixed border-separate border-spacing-0">
            <colgroup>
              <col className="w-[208px]" />
              <col />
              <col className="w-[130px]" />
              <col className="w-[120px]" />
              <col className="w-[12px]" />
            </colgroup>
            <thead>
              <tr>
                <HeadCell pin="h">Diễn giải</HeadCell>
                <HeadCell pin="h">Số tiền</HeadCell>
                <HeadCell pin="h">Chênh lệch</HeadCell>
                <HeadCell pin="h">TK xử lý chênh lệch</HeadCell>
                <th className="border-b border-[#7ba0d0] bg-[#adc7e6] p-0" />
              </tr>
            </thead>
            <tbody>
              {rows.map((r) => (
                <tr key={r}>
                  <td className={cell}>{r === 0 && "Mua 14.000.000 tỷ giá: 23.5"}</td>
                  <td className={cell} />
                  <td className={`${cell} bg-[#e5e5e5] pr-[3px] text-right`}>{r === 0 && "0"}</td>
                  <td className={`${cell} bg-[#e5e5e5]`} />
                  <td className="border-b border-dotted border-[#b4b4b4] p-0" />
                </tr>
              ))}
            </tbody>
          </table>
          <div className="flex h-[14px] justify-end">
            <span className="mr-3 w-[250px] bg-[#e5e5e5]" />
          </div>
          <div className="flex h-[17px] border-t border-[#7ba0d0] bg-[#f0f0f0] leading-[16px]">
            <span className="w-[208px] border-r border-[#7ba0d0] bg-[#d6d6d6] pl-1">Số dòng = 1</span>
            <span className="flex-1" />
            <span className="mr-[132px] w-[130px] border-r border-[#7ba0d0] bg-[#d6d6d6] pr-[3px] text-right">0</span>
          </div>
          <HScroll thumb="w-[136px]" />
        </div>
      </div>
      <div className="mt-2 flex h-[23px] items-end justify-end bg-[#adc7e6] pb-px pr-px">
        <svg width="11" height="11" viewBox="0 0 11 11">
          <path d="M8 0h2v2H8zM4 4h2v2H4zM8 4h2v2H8zM0 8h2v2H0zM4 8h2v2H4zM8 8h2v2H8z" fill="#4a6ea0" />
        </svg>
      </div>
    </section>
  );
}

/* ---------- options dialog ---------- */

function AccountGroup({ title }) {
  return (
    <Group title={title} className="h-[53px] w-[279px]">
      <div className="flex h-[38px] items-center whitespace-nowrap pl-2">
        <span className="w-[62px]">TK xử lý lãi</span>
        <Combo label={`${title} - lãi`} value="515" className="w-16" />
        <span className="ml-[10px] w-[63px]">TK xử lý lỗ</span>
        <Combo label={`${title} - lỗ`} value="6355" className="w-16" />
      </div>
    </Group>
  );
}

function WarningIcon() {
  return (
    <svg width="25" height="24" viewBox="0 0 25 24" className="shrink-0">
      <path d="M12.500 1.500L24 22.500H1z" fill="#ffd52e" stroke="#c99a1a" strokeWidth="1.200" strokeLinejoin="round" />
      <path d="M12.500 4L4 20c7 0 10-4 10-12z" fill="#fff0a0" opacity=".7" />
      <path d="M11 9h3l-.7 7h-1.600zM11.500 17.500h2v2h-2z" fill="#222" />
    </svg>
  );
}

function OptionsDialog() {
  return (
    <section role="dialog" aria-label="Tùy chọn" className="absolute left-[568px] top-[218px] z-20 w-[800px] border border-[#6596c8] bg-[#cbdcf1] shadow-[1px_2px_4px_rgba(0,0,0,0.45)]">
      <header className={`flex h-[30px] items-center bg-[#6596c8] pl-[2px] pr-[3px] text-[12px] text-white ${UI}`}>
        <h2 className="flex-1">Tùy chọn</h2>
        <button aria-label="Trợ giúp" className="mr-[6px] w-4 font-bold text-[#222]">?</button>
        <WindowButton kind="close" color="#333" />
      </header>
      <div className="flex h-[529px] px-[10px] pt-[6px]">
        <nav className="w-[152px] shrink-0 pl-px">
          {OPTION_TABS.map(([n, label], i) => (
            <button
              key={n}
              className={`flex h-[39px] w-full items-center gap-1 whitespace-nowrap border-l border-t border-[#7ba0d0] pl-[10px] text-left last:h-10 last:border-b ${
                n === "2" ? "bg-[#ffe59b] font-bold" : ""
              }`}
            >
              <span>
                {i === 9 ? (
                  <>
                    1<u>0</u>.
                  </>
                ) : (
                  <>
                    <u>{n}</u>.
                  </>
                )}
              </span>
              {label}
            </button>
          ))}
        </nav>
        <div className="flex min-w-0 flex-1 border border-[#7ba0d0]">
          <div className="h-full flex-1 overflow-hidden pl-[9px] pr-[9px]">
            <Group className="h-[33px] border-t-0">
              <label className="flex items-center whitespace-nowrap pl-[27px] pt-1">
                <input type="radio" name="print-order" className="mr-px h-[13px] w-[13px] appearance-none rounded-full border border-[#333] bg-white" />
                In lần lượt hết liên 1 của tất cả hóa đơn rồi in đến các liên tiếp theo
              </label>
            </Group>

            <Group title="Tiền tệ" className="mt-[10px] h-[213px]">
              <div className="pl-3 pt-[9px]">
                <div className="flex h-6 items-center">
                  <span className="w-[170px]">Cách đọc số 0 ở hàng chục</span>
                  <Combo label="Cách đọc số 0 ở hàng chục" value="Linh" className="w-[72px]" />
                  <span className="ml-[18px]">(VD: 105 đọc là: một trăm linh năm đồng)</span>
                </div>
                <div className="flex h-6 items-center">
                  <span className="w-[170px]">Cách đọc số tiền ở hàng nghìn</span>
                  <Combo label="Cách đọc số tiền ở hàng nghìn" value="Nghìn" className="w-[72px]" />
                  <span className="ml-[18px]">(VD: 7200 đọc là: bảy nghìn hai trăm đồng)</span>
                </div>
                <Check checked className="ml-[2px] h-[28px]">
                  Hiển thị từ "chẵn" khi đọc số tiền (VD: 100 đọc là: một trăm đồng chẵn)
                </Check>
                <Check checked className="ml-[2px] h-[18px]">
                  Có phát sinh nghiệp vụ liên quan đến ngoại tệ
                </Check>
                <div className="ml-1 flex h-[24px] items-center">
                  <span className="w-[278px] whitespace-nowrap">
                    Phương pháp tính tỷ giá xuất quỹ: <b>Bình quân tức thời</b>
                  </span>
                  <button className="h-[25px] w-[150px] border border-[#7ba0d0] bg-[#adc7e6]">Đổi phương pháp tính...</button>
                </div>
              </div>
              <div className="flex gap-[9px] pl-[7px] pt-[10px]">
                <AccountGroup title="Tài khoản xử lý chênh lệch tỷ giá xuất quỹ" />
                <AccountGroup title="TK xử lý chênh lệch tỷ giá thu tiền KH/trả tiền NCC" />
              </div>
            </Group>

            <Group title="Mua hàng" className="mt-3 h-[128px]">
              <div className="pl-[14px] pt-[6px]">
                <div className="flex h-6 items-center">
                  <Check className="w-[272px]">Có phát sinh mua hàng theo đơn giá sau thuế</Check>
                  <Check disabled>Ưu tiên tính thành tiền theo đơn giá sau thuế</Check>
                </div>
                <Check className="h-6">Tính Giá tính thuế nhập khẩu dựa trên Phí trước HQ nguyên tệ, Phí trước HQ bằng tiền hạch toán</Check>
                <div className="flex gap-[10px] pt-px">
                  <WarningIcon />
                  <p className="pt-px leading-[12px]">
                    Khi tích vào tùy chọn này thì cách tính giá tính thuế nhập khẩu thay đổi như sau:
                    <br />- Giá tính thuế nhập khẩu = (Giá FOB + Phí trước hải quan bằng ngoại tệ)
                    <br />- Giá tính thuế nhập khẩu quy đổi = Giá tính thuế nhập khẩu * Tỷ giá hải quan + Phí trước hải quan bằng
                    <br />
                    tiền hạch toán
                  </p>
                </div>
              </div>
            </Group>

            <Group title="Bán hàng" className="mt-[11px] h-[150px]">
              <div className="pl-[14px] pt-[6px]">
                <Check className="h-6">Cho phép lấy giá bán gần nhất theo từng khách hàng</Check>
                <Check className="h-6">Cảnh báo khi không chọn nhân viên bán hàng trên các chứng từ</Check>
                <div className="flex h-6 items-center">
                  <Check className="w-[272px]">Có phát sinh bán hàng theo đơn giá sau thuế</Check>
                  <Check disabled>Ưu tiên tính thành tiền theo đơn giá sau thuế</Check>
                </div>
                <Check disabled className="h-7">
                  Tự động tính số lượng khi nhập Đơn giá sau thuế và Thành tiền sau thuế
                </Check>
              </div>
            </Group>
          </div>
          <div className="flex w-4 flex-col items-center bg-[#f0f0f0]">
            <button aria-label="Cuộn lên" className="flex h-[17px] items-center">
              <svg width="9" height="6" viewBox="0 0 9 6">
                <path d="M1 5l3.500-3.500L8 5" fill="none" stroke="#505050" strokeWidth="1.500" />
              </svg>
            </button>
            <span className="h-[150px]" />
            <span className="h-[162px] w-full bg-[#cdcdcd]" />
            <span className="flex-1" />
            <button aria-label="Cuộn xuống" className="flex h-[17px] items-center">
              <svg width="9" height="6" viewBox="0 0 9 6">
                <path d="M1 1l3.500 3.500L8 1" fill="none" stroke="#505050" strokeWidth="1.500" />
              </svg>
            </button>
          </div>
        </div>
      </div>
      <div className="flex h-9 justify-end pr-2 pt-[5px]">
        <button className="mr-2 flex h-[25px] w-20 items-center border border-[#7ba0d0] bg-[#adc7e6] pl-[3px]">
          <ToolIcon name="check" />
          <span className="flex-1 text-center">Đồng ý</span>
        </button>
        <button className="mr-[5px] flex h-[25px] w-20 items-center border border-[#7ba0d0] bg-[#adc7e6] pl-[3px]">
          <ToolIcon name="cancel" />
          <span className="flex-1 text-center">Hủy bỏ</span>
        </button>
        <button className="h-[25px] w-[75px] border border-[#7ba0d0] bg-[#adc7e6]">Áp dụng</button>
      </div>
      <div className="h-[23px] bg-[#adc7e6]" />
    </section>
  );
}

/* ---------- taskbar ---------- */

function TaskIcon({ name }) {
  const shapes = {
    taskview: (
      <path d="M3.500 7.500h10v9h-10zM3.500 2v2.500h10V2M3.500 22v-2.500h10V22M17.500 2v4M17.500 11v11M16 8.500h3" fill="none" stroke="#fff" strokeWidth="1.200" />
    ),
    edge: (
      <path d="M2 11C3 4 8 1 13 1c7 0 10 5 10 12H9c0 4 3 6 7 6 2 0 4-1 6-2v5c-3 1-5 2-8 2-7 0-10-4-10-9 0-4 2-7 5-8-2 2-2 3-2 4h9c0-3-1-5-4-5-4 0-8 2-10 5z" fill="#0a78d6" />
    ),
    squirrel: (
      <>
        <circle cx="16" cy="13" r="7.500" fill="#3f7fd0" />
        <path d="M9 12c2-6 11-7 14-2-4-1-6 1-7 4-3 0-5 0-7-2z" fill="#f2c04e" />
        <path d="M10 16c4 2 10 1 12-1 0 5-3 8-7 8-3 0-5-3-5-7z" fill="#e04a8a" />
        <path d="M2 2l4-1 4 4-1 6-5-2z" fill="#9b8a7c" />
        <path d="M2 12l7-4 4 5-4 4z" fill="#8a3a24" />
      </>
    ),
    explorer: (
      <>
        <path d="M1 3h8l2 2h12v17H1z" fill="#f0b429" />
        <path d="M1 8h22v14H1z" fill="#ffd867" />
        <path d="M5 13h14v9h-4v-4H9v4H5z" fill="#3f9be0" />
      </>
    ),
    store: (
      <>
        <path d="M1 6h22v17H1z" fill="#fff" />
        <path d="M8 6V3.500C8 1 16 1 16 3.500V6" fill="none" stroke="#fff" strokeWidth="1.500" />
        <path d="M7 9h4.500v4.500H7z" fill="#f25022" />
        <path d="M12.500 9H17v4.500h-4.500z" fill="#7fba00" />
        <path d="M7 14.500h4.500V19H7z" fill="#00a4ef" />
        <path d="M12.500 14.500H17V19h-4.500z" fill="#ffb900" />
      </>
    ),
    mail: (
      <>
        <path d="M1 8L12 1l11 7v13H1z" fill="#0a5fb4" />
        <path d="M3 8h18l-9 7z" fill="#fff" />
        <path d="M1 8l11 8 11-8v14H1z" fill="#3ba3ee" />
      </>
    ),
    excel: (
      <>
        <path d="M1 1h21v20H1z" fill="#cfe9c8" stroke="#4f9e3f" />
        <path d="M15 11h8v12h-8z" fill="#fff" stroke="#6bb45c" />
        <path d="M16 14h6M16 17h6M16 20h6" stroke="#8cc97e" />
        <path d="M3 4h4l3 5 4-6h3l-5 8 5 8h-4l-3-5-3 5H3l5-8z" fill="#2f8f24" />
      </>
    ),
    chrome: (
      <>
        <circle cx="12" cy="12" r="11" fill="#fbc116" />
        <path d="M12 12L2.500 6.500A11 11 0 0121.500 6.500H12z" fill="#e33b2e" />
        <path d="M2.500 6.500A11 11 0 0011 23l5-8.500-4-2.500z" fill="#2aa24c" />
        <circle cx="12" cy="12" r="5.300" fill="#fff" />
        <circle cx="12" cy="12" r="4.200" fill="#4285f4" />
      </>
    ),
    acrobat: (
      <>
        <path d="M1 1h22v22H1z" fill="#b70a0a" />
        <path d="M1 1h22v8L1 14z" fill="#d81313" />
        <path d="M6 18c4-2 7-8 6-12-1-1-2 1-1 4 2 4 5 6 8 5 0-2-8-2-13 3z" fill="none" stroke="#fff" strokeWidth="1.300" />
      </>
    ),
    pc: (
      <>
        <circle cx="12" cy="12" r="11.500" fill="#2f7fd6" />
        <path d="M6 7h12v8H6z" fill="none" stroke="#fff" strokeWidth="1.600" />
        <path d="M7 14l10-6v6zM9 18h6M12 15v3" fill="#fff" stroke="#fff" />
      </>
    ),
    zalo: (
      <>
        <path d="M5 1h14c3 0 4 2 4 4v12c0 4-2 5-5 5H6l-5 1V5c0-3 2-4 4-4z" fill="#0a68ff" />
        <path d="M9 0h10c4 0 5 2 5 5v12c0 4-2 5-5 5H8c-2 0-3-1-4-2C2 13 3 3 9 0z" fill="#fff" />
      </>
    ),
  };
  return (
    <svg width="24" height="24" viewBox="0 0 24 24">
      {shapes[name]}
    </svg>
  );
}

const TASKS = [
  { name: "taskview" },
  { name: "edge" },
  { name: "squirrel" },
  { name: "explorer", open: true },
  { name: "store" },
  { name: "mail", badge: "20" },
  { name: "excel", open: true },
  { name: "misa", open: true, active: true },
  { name: "chrome", open: true },
  { name: "acrobat", open: true },
  { name: "pc", open: true },
  { name: "zalo", open: true },
];

function Taskbar() {
  return (
    <footer className={`flex h-10 items-stretch bg-linear-to-r from-[#22383f] via-[#1f333d] to-[#1a2744] text-[12px] text-white ${UI}`}>
      <button aria-label="Start" className="flex w-[48px] items-center justify-center">
        <svg width="17" height="17" viewBox="0 0 17 17">
          <path d="M0 2.500l7-1V8H0zM8 1.300L17 0v8H8zM0 9h7v6.500l-7-1zM8 9h9v8l-9-1.300z" fill="#fff" />
        </svg>
      </button>
      <div className="flex w-[344px] items-center gap-3 bg-[#f2f2f2] pl-3">
        <svg width="17" height="18" viewBox="0 0 17 18">
          <circle cx="10.500" cy="6" r="5.200" fill="none" stroke="#222" strokeWidth="1.300" />
          <path d="M7 10l-6 7" stroke="#222" strokeWidth="1.300" />
        </svg>
        <input aria-label="Search" placeholder="Type here to search" className={`w-full bg-transparent text-[14px] placeholder-[#444] outline-none ${SEGOE}`} />
      </div>
      {TASKS.map((t) => (
        <button key={t.name} aria-label={t.name} className={`relative flex w-[49px] items-center justify-center ${t.active ? "bg-[#4a5c68]" : ""}`}>
          {t.name === "misa" ? <MisaLogo size={24} /> : <TaskIcon name={t.name} />}
          {t.name === "zalo" && <span className="absolute text-[9px] font-bold text-[#0a68ff]">Zalo</span>}
          {t.badge && (
            <span className="absolute bottom-1 right-0 flex h-[18px] w-[18px] items-center justify-center rounded-full border border-[#999] bg-[#2a3038] text-[12px] font-medium">{t.badge}</span>
          )}
          {t.open && <span className={`absolute bottom-0 h-[2px] bg-[#76b9ed] ${t.active ? "w-full" : "w-10"}`} />}
        </button>
      ))}
      <span className="flex-1" />
      <label htmlFor="address" className="mr-[6px] self-center">Address</label>
      <div className="my-[6px] flex w-[230px] bg-white">
        <input id="address" className="min-w-0 flex-1 outline-none" />
        <svg width="9" height="6" viewBox="0 0 9 6" className="mr-3 self-center">
          <path d="M.5.500l4 4 4-4" fill="none" stroke="#444" strokeWidth="1.200" />
        </svg>
        <button aria-label="Refresh" className="w-[30px] border-l border-[#ddd] text-[16px] text-[#555]">↻</button>
      </div>
      <button aria-label="Hidden icons" className="ml-2 self-center">
        <svg width="13" height="8" viewBox="0 0 13 8">
          <path d="M.5 7l6-6 6 6" fill="none" stroke="#fff" strokeWidth="1.300" />
        </svg>
      </button>
      <svg width="17" height="15" viewBox="0 0 17 15" className="ml-[10px] self-center">
        <path d="M5 3.500h11.500v7H3.500V7M10 11v3M6 14h8M.5 1.500h4v4h-4zM2.500 6v2" fill="none" stroke="#fff" />
      </svg>
      <svg width="18" height="15" viewBox="0 0 18 15" className="ml-[7px] self-center">
        <path d="M.5 5.500h3l4-4v12l-4-4h-3zM10 5c1 1 1 4 0 5M12.500 3c2 2 2 7 0 9M15 1c3 3 3 10 0 13" fill="none" stroke="#fff" />
      </svg>
      <span className="ml-[9px] w-[24px] self-center">ENG</span>
      <time className="ml-[8px] w-[65px] self-center text-center leading-[18px]">
        14:42
        <br />
        23/03/2020
      </time>
      <button aria-label="Notifications" className="relative ml-1 w-[45px]">
        <svg width="17" height="16" viewBox="0 0 17 16" className="absolute left-2 top-[9px]">
          <path d="M0 0h16v13H7l-3 3v-3H0z" fill="#fff" />
          <path d="M3 4h10M3 7h10M3 10h6" stroke="#1b2a40" />
        </svg>
        <span className="absolute bottom-1 left-[15px] flex h-[18px] w-[18px] items-center justify-center rounded-full border border-[#888] bg-[#333b45] text-[12px] font-medium">21</span>
      </button>
      <span className="w-[5px] border-l border-[#6c7785]" />
    </footer>
  );
}

export default function App() {
  return (
    <div className="relative flex min-h-screen flex-col overflow-hidden bg-[#cbdcf1] font-['Liberation_Sans',Arial,sans-serif] text-[11px] leading-[14px] text-black">
      <TitleBar />
      <MenuBars />
      <div className="flex flex-1 gap-[3px] pb-[3px] pl-[3px] pt-[3px]">
        <Sidebar />
        <Workspace />
      </div>
      <StatusBar />
      <Taskbar />
      <TransferWindow />
      <OptionsDialog />
      <div className={`pointer-events-none absolute bottom-[88px] right-[88px] text-[#b9b9b9] ${SEGOE}`}>
        <p className="text-[19px] leading-[26px]">Activate Windows</p>
        <p className="text-[14px] leading-[20px]">Go to Settings to activate Windows.</p>
      </div>
    </div>
  );
}
